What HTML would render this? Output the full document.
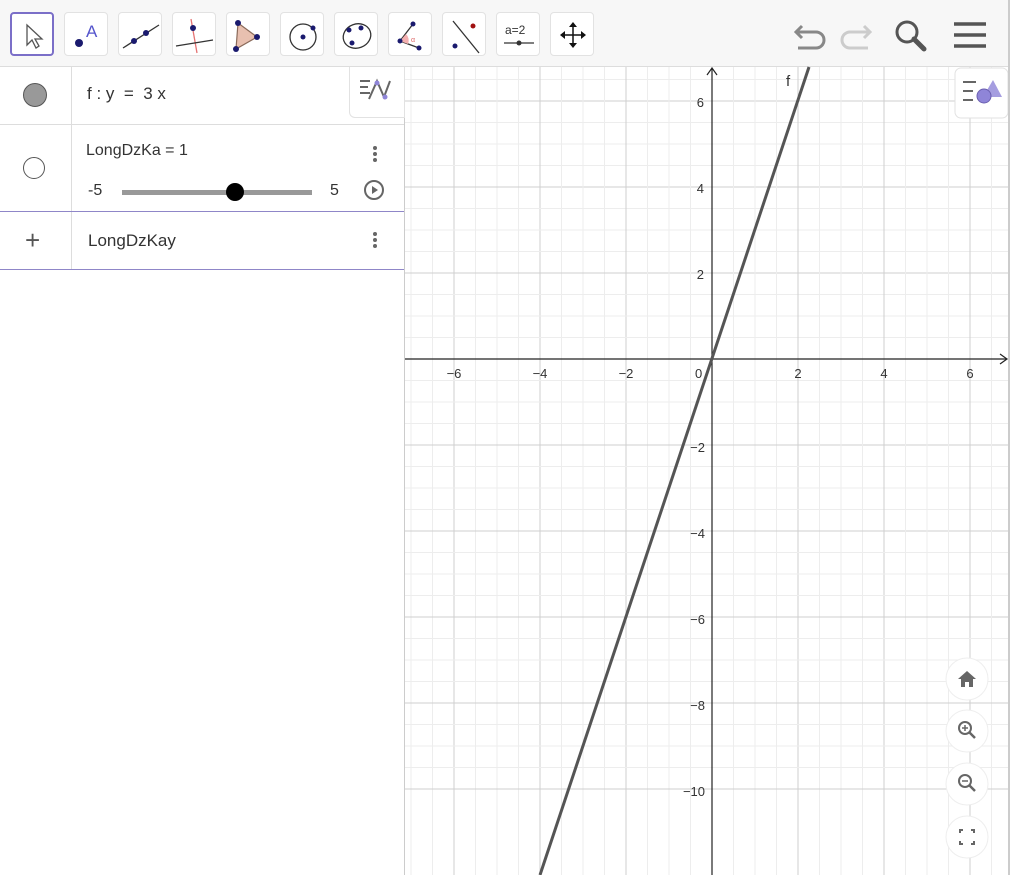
<!DOCTYPE html>
<html><head><meta charset="utf-8"><style>
body{margin:0;width:1024px;height:875px;overflow:hidden;background:#fff;font-family:"Liberation Sans",sans-serif;position:relative}
#tb{position:absolute;left:0;top:0;width:1008px;height:66px;background:#f7f7f7;border-bottom:1px solid #ddd}
.b{position:absolute;top:12px;width:44px;height:44px;background:#fff;border:1px solid #e2e2e2;border-radius:4px;box-sizing:border-box}
.b svg{position:absolute;left:0;top:0}
#alg{position:absolute;left:0;top:67px;width:404px;height:808px;background:#fff;border-right:1px solid #ccc}
.row{position:absolute;left:0;width:404px;border-bottom:1px solid #ddd}
.t{position:absolute;color:#333;font-size:17px}
#rb{position:absolute;left:1008px;top:0;width:2px;height:875px;background:#ccc}
</style></head><body>
<div id="tb">
 <div class="b" style="left:10px;border:2px solid #7b6fc8"><svg width="44" height="44"><path d="M15 11 L15 31 L20 26 L24 34 L27 32 L23 25 L30 25 Z" fill="#fff" stroke="#555" stroke-width="1.3"/></svg></div>
 <div class="b" style="left:64px"><svg width="44" height="44"><circle cx="14" cy="30" r="4" fill="#1a1a6e"/><text x="21" y="24" font-size="17" fill="#5555cc" font-family="Liberation Sans">A</text></svg></div>
 <div class="b" style="left:118px"><svg width="44" height="44"><line x1="4" y1="35" x2="40" y2="12" stroke="#333" stroke-width="1.3"/><circle cx="15" cy="28" r="3" fill="#1a1a6e"/><circle cx="27" cy="20" r="3" fill="#1a1a6e"/></svg></div>
 <div class="b" style="left:172px"><svg width="44" height="44"><line x1="18" y1="6" x2="24" y2="40" stroke="#e57373" stroke-width="1.3"/><line x1="3" y1="33" x2="40" y2="27" stroke="#333" stroke-width="1.3"/><circle cx="20" cy="15" r="3" fill="#1a1a6e"/></svg></div>
 <div class="b" style="left:226px"><svg width="44" height="44"><path d="M11 10 L30 24 L9 36 Z" fill="#e8c0b0" stroke="#8a6a5a" stroke-width="1.2"/><circle cx="11" cy="10" r="3" fill="#1a1a6e"/><circle cx="30" cy="24" r="3" fill="#1a1a6e"/><circle cx="9" cy="36" r="3" fill="#1a1a6e"/></svg></div>
 <div class="b" style="left:280px"><svg width="44" height="44"><circle cx="22" cy="24" r="13" fill="none" stroke="#333" stroke-width="1.3"/><circle cx="22" cy="24" r="2.5" fill="#1a1a6e"/><circle cx="32" cy="15" r="2.5" fill="#1a1a6e"/></svg></div>
 <div class="b" style="left:334px"><svg width="44" height="44"><ellipse cx="22" cy="23" rx="14" ry="12" fill="none" stroke="#333" stroke-width="1.3" transform="rotate(-20 22 23)"/><circle cx="14" cy="17" r="2.5" fill="#1a1a6e"/><circle cx="26" cy="15" r="2.5" fill="#1a1a6e"/><circle cx="17" cy="30" r="2.5" fill="#1a1a6e"/></svg></div>
 <div class="b" style="left:388px"><svg width="44" height="44"><path d="M11 28 L24 11 M11 28 L30 35" stroke="#333" stroke-width="1.3" fill="none"/><path d="M11 28 L17 21 A9 9 0 0 1 19 31 Z" fill="#f4b0b0"/><text x="22" y="29" font-size="7" fill="#d66">α</text><circle cx="11" cy="28" r="2.5" fill="#1a1a6e"/><circle cx="24" cy="11" r="2.5" fill="#1a1a6e"/><circle cx="30" cy="35" r="2.5" fill="#1a1a6e"/></svg></div>
 <div class="b" style="left:442px"><svg width="44" height="44"><line x1="10" y1="8" x2="36" y2="40" stroke="#333" stroke-width="1.3"/><circle cx="30" cy="13" r="2.5" fill="#a01010"/><circle cx="12" cy="33" r="2.5" fill="#1a1a6e"/></svg></div>
 <div class="b" style="left:496px"><svg width="44" height="44"><text x="8" y="21" font-size="12" fill="#333" font-family="Liberation Sans">a=2</text><line x1="7" y1="30" x2="37" y2="30" stroke="#333" stroke-width="1.3"/><circle cx="22" cy="30" r="2.5" fill="#333"/></svg></div>
 <div class="b" style="left:550px"><svg width="44" height="44"><path d="M22 11 V33 M11 22 H33" stroke="#111" stroke-width="1.5"/><path d="M22 9 L18 14 H26 Z M22 35 L18 30 H26 Z M9 22 L14 18 V26 Z M35 22 L30 18 V26 Z" fill="#111"/></svg></div>
 <svg style="position:absolute;left:790px;top:16px" width="210" height="40"><path d="M12 10 L6 16 L12 22 M6 16 H26 A8 8 0 0 1 26 32 H8" fill="none" stroke="#888" stroke-width="3"/><path d="M74 10 L80 16 L74 22 M80 16 H60 A8 8 0 0 0 60 32 H78" fill="none" stroke="#ccc" stroke-width="3"/><circle cx="117" cy="16" r="10" fill="none" stroke="#555" stroke-width="3"/><line x1="124" y1="23" x2="134" y2="33" stroke="#555" stroke-width="5" stroke-linecap="round"/><path d="M164 8 H196 M164 19 H196 M164 30 H196" stroke="#555" stroke-width="3.5"/></svg>
</div>
<div id="alg">
 <div class="row" style="top:0;height:57px">
  <div style="position:absolute;left:23px;top:16px;width:22px;height:22px;border-radius:50%;background:#999;border:1.5px solid #555"></div>
  <div style="position:absolute;left:71px;top:0;width:1px;height:57px;background:#ddd"></div>
  <div class="t" style="left:87px;top:17px">f : y &nbsp;= &nbsp;3 x</div>
  <div style="position:absolute;left:349px;top:0;width:54px;height:50px;border:1px solid #e2e2e2;border-top:none;border-radius:0 0 0 6px;background:#fff"><svg width="54" height="50"><path d="M10 14 H20 M10 20 H18 M10 26 H20 M19 32 L27 14 L34 30 L40 14" stroke="#666" stroke-width="2" fill="none"/><circle cx="27" cy="16" r="2.5" fill="#8f85d8"/><circle cx="35" cy="30" r="2.5" fill="#8f85d8"/></svg></div>
 </div>
 <div class="row" style="top:58px;height:86px;border-bottom:1px solid #8f86c8">
  <div style="position:absolute;left:23px;top:32px;width:22px;height:22px;border-radius:50%;border:1.5px solid #555;box-sizing:border-box"></div>
  <div style="position:absolute;left:71px;top:0;width:1px;height:86px;background:#ddd"></div>
  <div class="t" style="left:86px;top:17px;font-size:16px">LongDzKa = 1</div>
  <div class="t" style="left:88px;top:57px;font-size:16px">-5</div>
  <div style="position:absolute;left:122px;top:65px;width:190px;height:5px;background:#999"></div>
  <div style="position:absolute;left:226px;top:58px;width:18px;height:18px;border-radius:50%;background:#000"></div>
  <div class="t" style="left:330px;top:57px;font-size:16px">5</div>
  <div style="position:absolute;left:364px;top:55px;width:20px;height:20px;border-radius:50%;border:2px solid #666;box-sizing:border-box"><svg width="16" height="16"><path d="M6 4 L12 8 L6 12 Z" fill="#666"/></svg></div>
  <div style="position:absolute;left:372px;top:20px"><svg width="6" height="20"><circle cx="3" cy="3" r="2" fill="#666"/><circle cx="3" cy="9" r="2" fill="#666"/><circle cx="3" cy="15" r="2" fill="#666"/></svg></div>
 </div>
 <div class="row" style="top:145px;height:57px;border-bottom:1px solid #8f86c8">
  <div style="position:absolute;left:71px;top:0;width:1px;height:57px;background:#ddd"></div>
  <div class="t" style="left:25px;top:13px;font-size:26px;color:#555;font-weight:300">+</div>
  <div class="t" style="left:88px;top:19px;font-size:17px">LongDzKay</div>
  <div style="position:absolute;left:372px;top:19px"><svg width="6" height="20"><circle cx="3" cy="3" r="2" fill="#666"/><circle cx="3" cy="9" r="2" fill="#666"/><circle cx="3" cy="15" r="2" fill="#666"/></svg></div>
 </div>
</div>
<svg style="position:absolute;left:405px;top:67px" width="603" height="808" font-family="Liberation Sans" font-size="13" fill="#333">
<g transform="translate(-405,-67)">
<g stroke="#ececec" stroke-width="1" id="minor"></g>
<script>
(function(){var g=document.getElementById('minor');var ns='http://www.w3.org/2000/svg';
function L(x1,y1,x2,y2,c){var l=document.createElementNS(ns,'line');l.setAttribute('x1',x1);l.setAttribute('y1',y1);l.setAttribute('x2',x2);l.setAttribute('y2',y2);l.setAttribute('stroke',c);g.appendChild(l);}
for(var i=-20;i<=20;i++){var x=712+i*21.5,y=359+i*21.5,c=(i%4==0)?'#cfcfcf':'#ededed';
if(x>405&&x<1008)L(x,67,x,875,c);if(y>67&&y<875)L(405,y,1008,y,c);}})();
</script>
</g>
</svg>
<svg style="position:absolute;left:0;top:0" width="1024" height="875" font-family="Liberation Sans" font-size="13" fill="#333">
<line x1="405" y1="359" x2="1006" y2="359" stroke="#222" stroke-width="1.2"/>
<path d="M1000 354 L1007 359 L1000 364" fill="none" stroke="#222" stroke-width="1.2"/>
<line x1="712" y1="69" x2="712" y2="875" stroke="#222" stroke-width="1.2"/>
<path d="M707 75 L712 68 L717 75" fill="none" stroke="#222" stroke-width="1.2"/>
<line x1="809" y1="67" x2="540" y2="875" stroke="#555" stroke-width="3"/>
<text x="786" y="86" font-size="15">f</text>
<g text-anchor="middle"><text x="454" y="378">−6</text><text x="540" y="378">−4</text><text x="626" y="378">−2</text><text x="798" y="378">2</text><text x="884" y="378">4</text><text x="970" y="378">6</text></g>
<text x="695" y="378">0</text>
<g text-anchor="end"><text x="704" y="107">6</text><text x="704" y="193">4</text><text x="704" y="279">2</text><text x="705" y="452">−2</text><text x="705" y="538">−4</text><text x="705" y="624">−6</text><text x="705" y="710">−8</text><text x="705" y="796">−10</text></g>
<g><rect x="955" y="68" width="53" height="50" rx="6" fill="#fff" stroke="#e2e2e2"/><path d="M963 82 H976 M963 91 H973 M963 100 H973" stroke="#666" stroke-width="2"/><path d="M983 97 L993 80 L1002 97 Z" fill="#8f85d8" opacity=".8"/><circle cx="984" cy="96" r="7" fill="#8f85d8" stroke="#6b5fb0"/></g>
<g fill="#fff" stroke="#eee"><circle cx="967" cy="679" r="21"/><circle cx="967" cy="731" r="21"/><circle cx="967" cy="784" r="21"/><circle cx="967" cy="837" r="21"/></g>
<path d="M967 671 L958 679 H961 V687 H965 V682 H969 V687 H973 V679 H976 Z" fill="#666"/>
<circle cx="965" cy="728" r="6" fill="none" stroke="#666" stroke-width="2"/><path d="M969 732 L975 738" stroke="#666" stroke-width="2.5"/><path d="M962 728 H968 M965 725 V731" stroke="#666" stroke-width="1.5"/>
<circle cx="965" cy="781" r="6" fill="none" stroke="#666" stroke-width="2"/><path d="M969 785 L975 791" stroke="#666" stroke-width="2.5"/><path d="M962 781 H968" stroke="#666" stroke-width="1.5"/>
<path d="M960 833 V830 H963 M971 830 H974 V833 M974 841 V844 H971 M963 844 H960 V841" fill="none" stroke="#666" stroke-width="2"/>
</svg>
<div id="rb"></div>
</body></html>
